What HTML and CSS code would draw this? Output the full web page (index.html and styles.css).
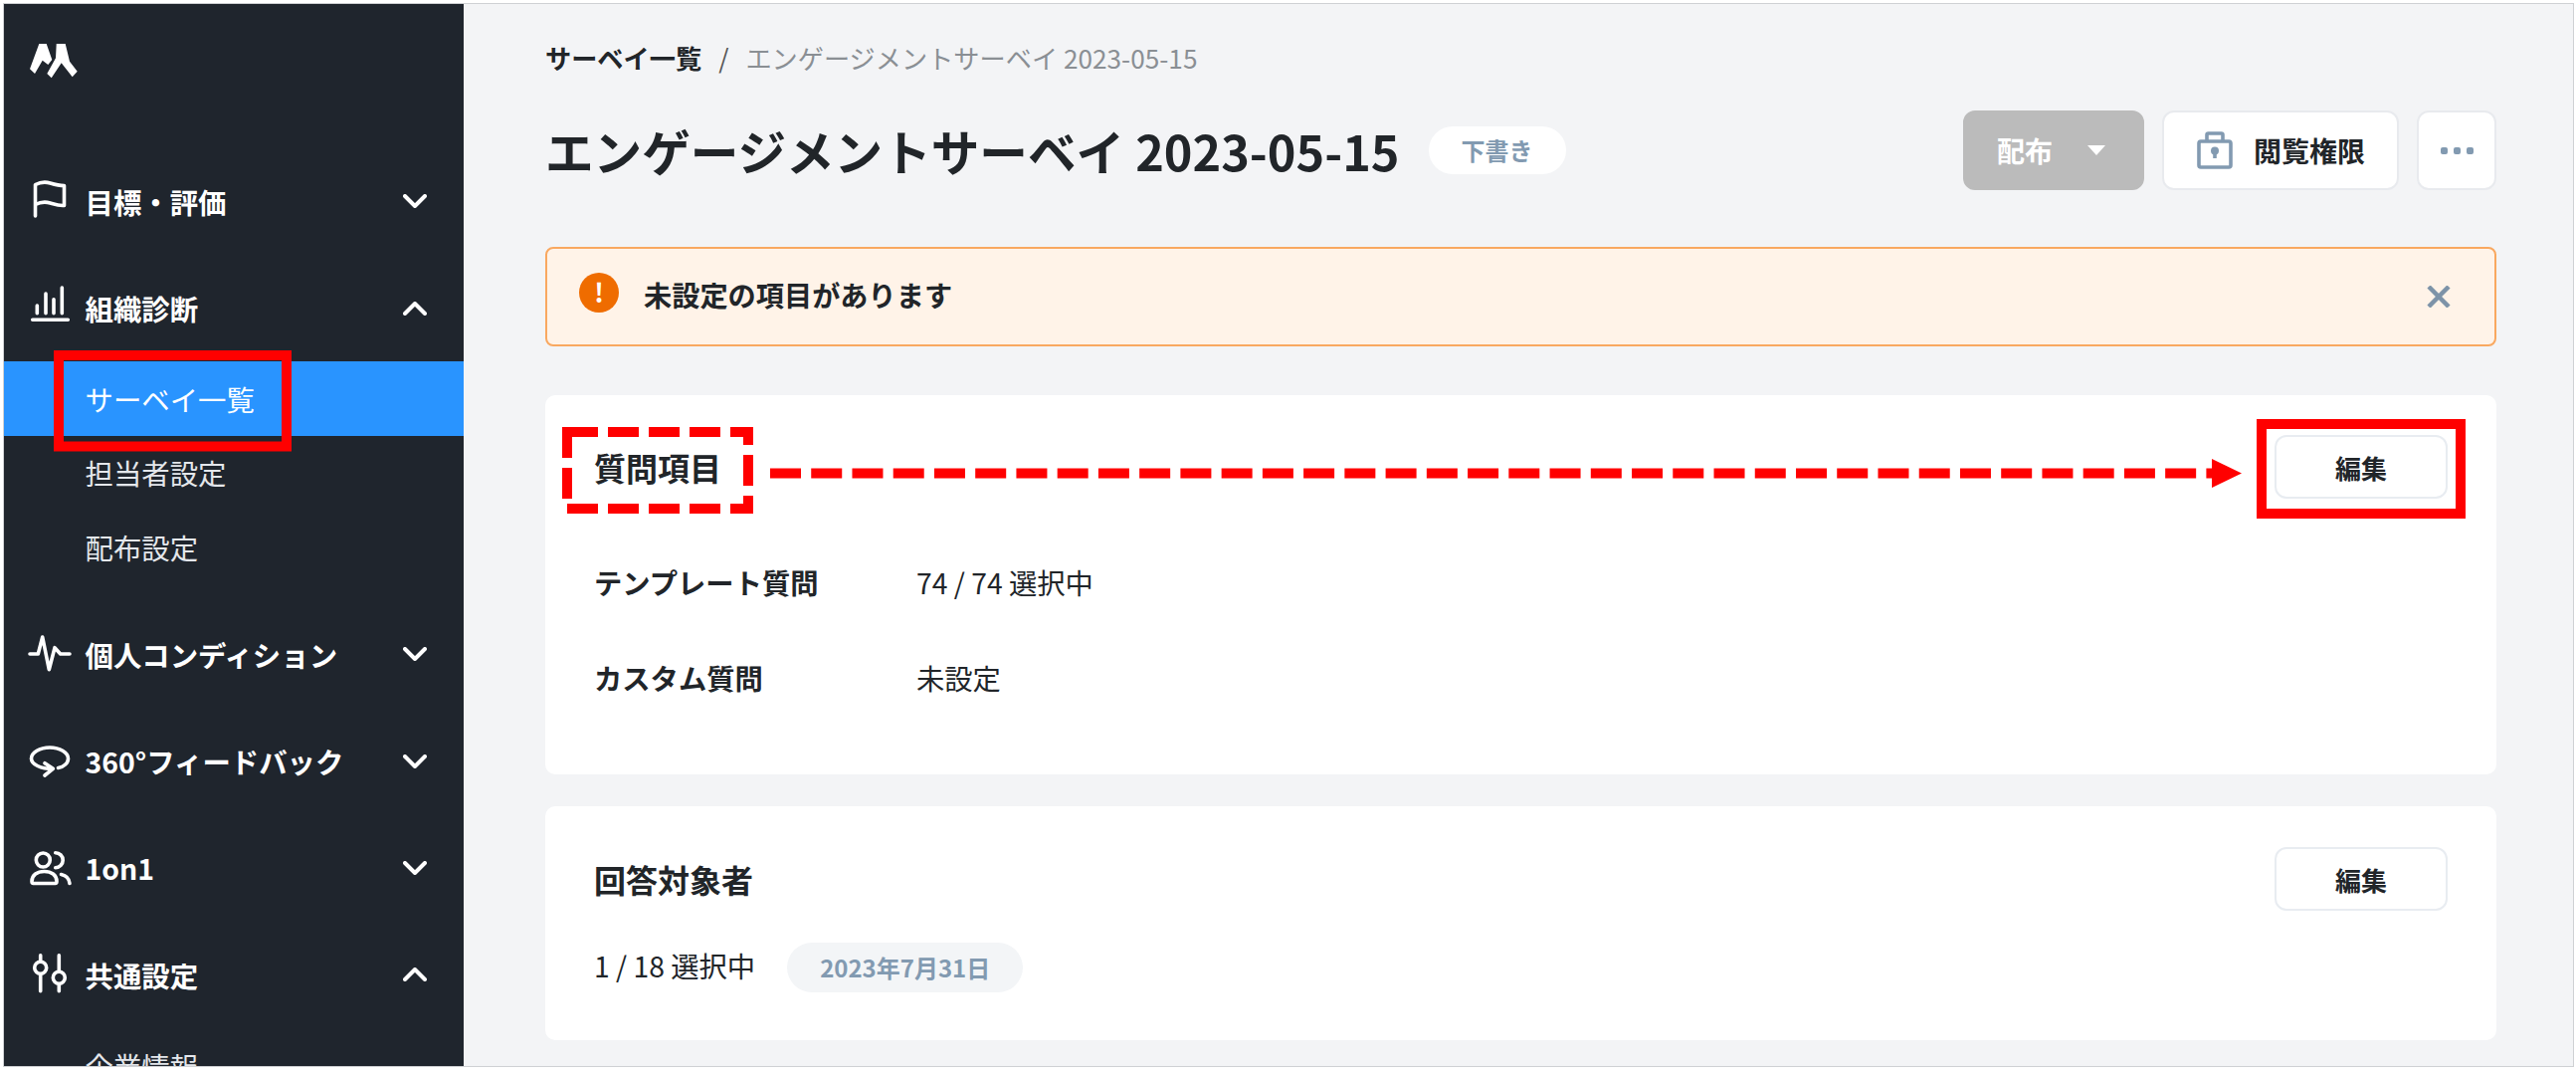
FILE: index.html
```html
<!DOCTYPE html>
<html lang="ja">
  <head>
    <meta charset="UTF-8" />
    <title>エンゲージメントサーベイ 2023-05-15</title>
    <link rel="stylesheet" href="styles.css">
  </head>
  <body>
    <div class="frame">
      <aside class="sidebar">
        <div class="logo">
          <svg width="48" height="36" viewBox="0 0 48 36" fill="#fff">
            <polygon points="9.3,1 16.700,1 22.300,17 18.300,22 12.700,17.700 5,31 0,26.300" />
            <polygon points="26.700,1 35.700,1 40,18.700 47.700,28.700 42.700,34.300 31.700,20.300 21.700,35.300 17.300,31 26,15.300" />
          </svg>
        </div>

        <nav class="nav">
          <a class="nav-item" href="#">
            <svg class="nav-icon" viewBox="0 0 42 42"><path d="M6.500 36V4.500c6-3 10-3 15-1.500s9 2.500 14 2.500V25.500c-5 .5-9-1-14-2.500s-9-1.500-15 1.500" /></svg>
            <span>目標・評価</span>
            <svg class="chevron" viewBox="0 0 24 14"><path d="M2 2l10 10L22 2" /></svg>
          </a>

          <a class="nav-item" href="#">
            <svg class="nav-icon" viewBox="0 0 42 42"><path d="M3.700 32.300H39.300M8.300 18v7.700M17 6v19.700M25 11.700v14M33.300 0v25.700" /></svg>
            <span>組織診断</span>
            <svg class="chevron" viewBox="0 0 24 14"><path d="M2 12L12 2l10 10" /></svg>
          </a>
          <div class="sub-nav">
            <a class="sub-item active" href="#">サーベイ一覧</a>
            <a class="sub-item" href="#">担当者設定</a>
            <a class="sub-item" href="#">配布設定</a>
          </div>

          <a class="nav-item spaced" href="#">
            <svg class="nav-icon" viewBox="0 0 42 42"><path d="M1 21h8.300L13.700 4l6.600 32.700L26 14.700 31.700 21H41" /></svg>
            <span>個人コンディション</span>
            <svg class="chevron" viewBox="0 0 24 14"><path d="M2 2l10 10L22 2" /></svg>
          </a>

          <a class="nav-item" href="#">
            <svg class="nav-icon" viewBox="0 0 42 42"><path d="M29.500 27.500C35.500 26.500 39.500 22.500 39.500 18 39.500 12 31 7 21 7S2.500 12 2.500 18C2.500 24 12 28.500 24 28.500M16 22.700l8.300 5.600L16 35" /></svg>
            <span>360°フィードバック</span>
            <svg class="chevron" viewBox="0 0 24 14"><path d="M2 2l10 10L22 2" /></svg>
          </a>

          <a class="nav-item" href="#">
            <svg class="nav-icon" viewBox="0 0 42 42"><circle cx="14.300" cy="13" r="7" /><path d="M26.700 5.700a7.500 7.500 0 0 1 0 15M3 34.500C3 28 8.500 24.500 15.500 24.500S28 28 28 34.500c0 1.200-.5 2-1.500 2h-22c-1 0-1.500-.8-1.500-2zM32.500 27.500c4.500 1 8 3.500 8.500 9" /></svg>
            <span>1on1</span>
            <svg class="chevron" viewBox="0 0 24 14"><path d="M2 2l10 10L22 2" /></svg>
          </a>

          <a class="nav-item" href="#">
            <svg class="nav-icon" viewBox="0 0 42 42"><path d="M11.700 1.700v36M30.300 1.700v36" /><circle class="knob" cx="11.700" cy="14.300" r="6" /><circle class="knob" cx="30.300" cy="24.300" r="6" /></svg>
            <span>共通設定</span>
            <svg class="chevron" viewBox="0 0 24 14"><path d="M2 12L12 2l10 10" /></svg>
          </a>
          <div class="sub-nav">
            <a class="sub-item" href="#">企業情報</a>
          </div>
        </nav>
      </aside>

      <main class="content">
        <div class="breadcrumb">
          <a href="#">サーベイ一覧</a>
          <span class="separator">/</span>
          <span class="current">エンゲージメントサーベイ 2023-05-15</span>
        </div>

        <div class="page-head">
          <h1>エンゲージメントサーベイ 2023-05-15</h1>
          <span class="status">下書き</span>
          <div class="actions">
            <button class="btn btn-disabled">配布<i class="caret"></i></button>
            <button class="btn btn-access">
              <svg width="36" height="38" viewBox="0 0 36 38" fill="none" stroke="#829ab1" stroke-width="3.600">
                <rect x="2" y="10" width="32" height="26" rx="2" />
                <path d="M10 10V3.500C10 2.500 10.500 2 11.500 2h13c1 0 1.500 .5 1.500 1.500V10" />
                <circle cx="18" cy="19.500" r="4" fill="#829ab1" stroke="none" />
                <path d="M18 21v6" />
              </svg>
              閲覧権限
            </button>
            <button class="btn btn-more" aria-label="その他"><i></i><i></i><i></i></button>
          </div>
        </div>

        <div class="alert">
          <span class="alert-icon">!</span>
          <strong>未設定の項目があります</strong>
          <svg class="alert-close" viewBox="0 0 24 22"><path d="M2 1l20 20M22 1L2 21" /></svg>
        </div>

        <section class="card">
          <div class="card-head">
            <h2>質問項目</h2>
            <button class="btn-edit">編集</button>
          </div>
          <dl class="detail">
            <div class="detail-row">
              <dt>テンプレート質問</dt>
              <dd>74 / 74 選択中</dd>
            </div>
            <div class="detail-row">
              <dt>カスタム質問</dt>
              <dd>未設定</dd>
            </div>
          </dl>
        </section>

        <section class="card card-target">
          <div class="card-head">
            <h2>回答対象者</h2>
            <button class="btn-edit">編集</button>
          </div>
          <div class="target-row">
            <span class="target-count">1 / 18 選択中</span>
            <span class="date-pill">2023年7月31日</span>
          </div>
        </section>
      </main>
    </div>

    <!-- 赤枠の注釈 -->
    <svg class="annotations" width="2589" height="1077" viewBox="0 0 2589 1077" fill="none" stroke="#f00" stroke-width="10">
      <rect x="59" y="357" width="229" height="91.500" />
      <rect x="2273" y="426" width="200" height="90" />
      <rect x="570" y="434" width="182" height="77" stroke-dasharray="31 10" />
      <path d="M774 475.500H2226" stroke-dasharray="31 10.240" />
      <polygon points="2223,461 2253,475.500 2223,490" fill="#f00" stroke="none" />
    </svg>
  </body>
</html>
```

FILE: styles.css
```css
* {
  margin: 0;
  padding: 0;
  box-sizing: border-box;
  font-family: "Noto Sans CJK JP", "Noto Sans", sans-serif;
}
html,
body {
  height: 1077px;
  overflow: hidden;
  background: #fff;
}
a {
  color: inherit;
  text-decoration: none;
}
button {
  cursor: pointer;
}
.frame {
  display: flex;
  height: 1069px;
  margin: 3px 2px 0 3px;
  border: 1px solid #cfd1d4;
  overflow: hidden;
  background: #f3f4f6;
}

/* Sidebar */
.sidebar {
  flex: 0 0 462px;
  background: #1f252d;
  color: #fff;
  overflow: hidden;
}
.logo {
  display: flex;
  height: 144.500px;
  padding: 39px 0 0 26px;
}
.nav-item {
  display: flex;
  align-items: center;
  height: 107.400px;
  padding: 0 37px 0 25px;
  font-size: 28.400px;
  font-weight: 700;
}
.nav-item.spaced {
  margin-top: 17px;
}
.nav-item span {
  margin-left: 14.500px;
}
.nav-icon {
  flex: none;
  width: 42px;
  height: 42px;
  fill: none;
  stroke: #fff;
  stroke-width: 3.600;
  stroke-linecap: round;
  stroke-linejoin: round;
  overflow: visible;
}
.nav-icon .knob {
  fill: #1f252d;
}
.chevron {
  flex: none;
  width: 24px;
  height: 14px;
  margin-left: auto;
  fill: none;
  stroke: #fff;
  stroke-width: 4;
  stroke-linecap: round;
  stroke-linejoin: round;
}
.sub-item {
  display: flex;
  align-items: center;
  height: 74.400px;
  padding-left: 81.500px;
  font-size: 28.400px;
  color: #e4e7eb;
}
.sub-item.active {
  background: #2994ff;
  color: #fff;
}

/* Content */
.content {
  flex: 1;
  min-width: 0;
  padding: 35px 77px 0 82px;
  color: #212529;
}
.breadcrumb {
  display: flex;
  align-items: center;
  height: 38px;
  font-size: 26.200px;
}
.breadcrumb a {
  font-weight: 700;
}
.breadcrumb .separator {
  margin: 0 17px 0 17px;
  color: #555;
}
.breadcrumb .current {
  color: #8a8f94;
}
.page-head {
  display: flex;
  align-items: center;
  height: 80px;
  margin-top: 34px;
}
h1 {
  font-size: 48.600px;
  font-weight: 700;
  line-height: 1.2;
}
.status {
  margin-left: 29px;
  padding: 0 33px;
  height: 48px;
  line-height: 48px;
  border-radius: 24px;
  background: #fff;
  color: #829ab1;
  font-size: 24px;
  font-weight: 700;
}
.actions {
  display: flex;
  gap: 18px;
  margin-left: auto;
}
.btn {
  display: flex;
  align-items: center;
  height: 80px;
  border: 2px solid #e8eaee;
  border-radius: 12px;
  background: #fff;
  color: #212529;
  font-size: 28px;
  font-weight: 700;
}
.btn-disabled {
  width: 182px;
  padding-left: 32px;
  border-color: #bbb;
  background: #bbb;
  color: #fff;
}
.caret {
  width: 0;
  height: 0;
  margin-left: 35px;
  border-left: 9px solid transparent;
  border-right: 9px solid transparent;
  border-top: 10px solid #fff;
}
.btn-access {
  width: 238px;
  padding-left: 33px;
  gap: 21px;
}
.btn-more {
  justify-content: center;
  gap: 6px;
  width: 80px;
}
.btn-more i {
  width: 7px;
  height: 7px;
  border-radius: 2px;
  background: #829ab1;
}
.alert {
  display: flex;
  align-items: center;
  height: 100px;
  margin-top: 57px;
  padding: 0 44px 0 32px;
  border: 2px solid #f9a860;
  border-radius: 8px;
  background: #fff3e8;
}
.alert-icon {
  flex: none;
  width: 40px;
  height: 40px;
  margin-bottom: 8px;
  line-height: 38px;
  border-radius: 50%;
  background: #ef6c00;
  color: #fff;
  font-size: 26px;
  font-weight: 700;
  text-align: center;
}
.alert strong {
  margin: 0 0 6px 25px;
  font-size: 28.200px;
  font-weight: 700;
}
.alert-close {
  width: 24px;
  height: 22px;
  margin-left: auto;
  fill: none;
  stroke: #7d93a8;
  stroke-width: 4.500;
}
.card {
  height: 381px;
  margin-top: 49px;
  padding: 40px 49px 0 49px;
  border-radius: 10px;
  background: #fff;
}
.card-target {
  height: 235px;
  margin-top: 32px;
  padding-top: 41px;
}
.card-head {
  display: flex;
  align-items: center;
  justify-content: space-between;
  height: 64px;
}
h2 {
  font-size: 32px;
  font-weight: 700;
}
.btn-edit {
  width: 174px;
  height: 64px;
  border: 2px solid #e8ecf1;
  border-radius: 12px;
  background: #fff;
  color: #212529;
  font-size: 26px;
  font-weight: 700;
}
.detail {
  margin-top: 35px;
}
.detail-row {
  display: flex;
  align-items: center;
  height: 96px;
  font-size: 28.300px;
}
.detail-row dt {
  width: 324px;
  font-weight: 700;
}
.target-row {
  display: flex;
  align-items: center;
  gap: 32px;
  height: 50px;
  margin-top: 32px;
  font-size: 28.300px;
}
.target-count {
  margin-bottom: 6px;
}
.date-pill {
  padding: 0 33px;
  height: 50px;
  line-height: 50px;
  border-radius: 25px;
  background: #f3f5f7;
  color: #829ab1;
  font-size: 24px;
  font-weight: 700;
}

/* Annotations */
.annotations {
  position: absolute;
  top: 0;
  left: 0;
  pointer-events: none;
}
```
